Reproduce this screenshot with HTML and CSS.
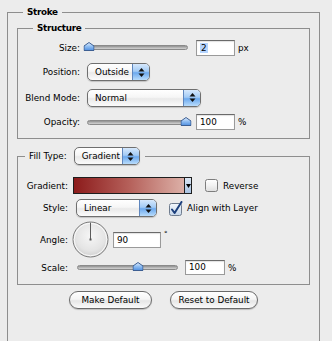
FILE: index.html
```html
<!DOCTYPE html>
<html lang="en">
<head>
<meta charset="utf-8">
<title>Stroke</title>
<link rel="stylesheet" href="styles.css">
</head>
<body>
<fieldset class="box box-outer">
  <legend class="legend legend-outer">Stroke</legend>
  <div class="outer-body">
    <fieldset class="box box-structure">
      <legend class="legend legend-structure">Structure</legend>
      <div class="form form-structure">
        <span class="label">Size:</span>
        <div class="control">
          <div class="slider slider-struct"><svg class="thumb" style="left:1%" width="11" height="9" viewBox="0 0 11 9"><defs><linearGradient id="tg1" x1="0" y1="0" x2="0" y2="1"><stop offset="0" stop-color="#e3f0ff"/><stop offset="0.5" stop-color="#8fbdf2"/><stop offset="1" stop-color="#4f8fe0"/></linearGradient></defs><polygon points="0.5,8.5 0.5,4 5.5,0.5 10.5,4 10.5,8.5" fill="url(#tg1)" stroke="#3d5f93"/></svg></div>
          <div class="field field-struct"><span class="sel">2</span></div>
          <span class="unit">px</span>
        </div>
        <span class="label">Position:</span>
        <div class="control">
          <div class="popup popup-position"><span class="popup-text">Outside</span><span class="popup-arrows"><svg width="7" height="11" viewBox="0 0 7 11"><polygon points="0.5,4.5 3.5,1 6.5,4.5" fill="#111"/><polygon points="0.5,6.5 3.5,10 6.5,6.5" fill="#111"/></svg></span></div>
        </div>
        <span class="label">Blend Mode:</span>
        <div class="control">
          <div class="popup popup-blend"><span class="popup-text">Normal</span><span class="popup-arrows"><svg width="7" height="11" viewBox="0 0 7 11"><polygon points="0.5,4.5 3.5,1 6.5,4.5" fill="#111"/><polygon points="0.5,6.5 3.5,10 6.5,6.5" fill="#111"/></svg></span></div>
        </div>
        <span class="label">Opacity:</span>
        <div class="control">
          <div class="slider slider-struct"><svg class="thumb" style="left:99%" width="11" height="9" viewBox="0 0 11 9"><defs><linearGradient id="tg2" x1="0" y1="0" x2="0" y2="1"><stop offset="0" stop-color="#e3f0ff"/><stop offset="0.5" stop-color="#8fbdf2"/><stop offset="1" stop-color="#4f8fe0"/></linearGradient></defs><polygon points="0.5,8.5 0.5,4 5.5,0.5 10.5,4 10.5,8.5" fill="url(#tg2)" stroke="#3d5f93"/></svg></div>
          <div class="field field-struct">100</div>
          <span class="unit">%</span>
        </div>
      </div>
    </fieldset>

    <fieldset class="box box-fill">
      <legend class="legend legend-fill">
        <span class="legend-label">Fill Type:</span>
        <div class="popup popup-fill"><span class="popup-text">Gradient</span><span class="popup-arrows"><svg width="7" height="11" viewBox="0 0 7 11"><polygon points="0.5,4.5 3.5,1 6.5,4.5" fill="#111"/><polygon points="0.5,6.5 3.5,10 6.5,6.5" fill="#111"/></svg></span></div>
      </legend>
      <div class="form form-fill">
        <span class="label">Gradient:</span>
        <div class="control">
          <div class="gradient-picker"><span class="gradient-swatch"></span><span class="gradient-arrow"><svg width="5" height="4" viewBox="0 0 5 4"><polygon points="0,0 5,0 2.5,4" fill="#000"/></svg></span></div>
          <span class="check check-reverse"><svg class="checkbox" width="13" height="13" viewBox="0 0 13 13"><defs><linearGradient id="cb1" x1="0" y1="0" x2="0" y2="1"><stop offset="0" stop-color="#ffffff"/><stop offset="0.5" stop-color="#f2f2f2"/><stop offset="1" stop-color="#dedede"/></linearGradient></defs><rect x="0.5" y="0.5" width="12" height="12" rx="2" fill="url(#cb1)" stroke="#7d7d7d"/></svg>Reverse</span>
        </div>
        <span class="label">Style:</span>
        <div class="control">
          <div class="popup popup-style"><span class="popup-text">Linear</span><span class="popup-arrows"><svg width="7" height="11" viewBox="0 0 7 11"><polygon points="0.5,4.5 3.5,1 6.5,4.5" fill="#111"/><polygon points="0.5,6.5 3.5,10 6.5,6.5" fill="#111"/></svg></span></div>
          <span class="check check-align"><svg class="checkbox" width="14" height="15" viewBox="0 0 14 15"><defs><linearGradient id="cb2" x1="0" y1="0" x2="0" y2="1"><stop offset="0" stop-color="#f4f8fd"/><stop offset="0.5" stop-color="#dde7f2"/><stop offset="1" stop-color="#c6d6ea"/></linearGradient></defs><rect x="0.5" y="2.5" width="12" height="12" rx="2" fill="url(#cb2)" stroke="#6f7c8e"/><path d="M3 8.5 L5.6 12 L12.5 1" fill="none" stroke="#1c3f7c" stroke-width="2" stroke-linecap="round" stroke-linejoin="round"/></svg>Align with Layer</span>
        </div>
        <span class="label">Angle:</span>
        <div class="control">
          <svg class="dial" width="37" height="37" viewBox="0 0 37 37"><defs><radialGradient id="dg" cx="0.5" cy="0.4" r="0.6"><stop offset="0" stop-color="#f6f6f6"/><stop offset="0.7" stop-color="#e4e4e4"/><stop offset="1" stop-color="#cfcfcf"/></radialGradient></defs><circle cx="18.5" cy="18.5" r="17.5" fill="url(#dg)" stroke="#7b7b7b"/><circle cx="18.5" cy="18.5" r="16.3" fill="none" stroke="#fbfbfb" stroke-width="1"/><line x1="18.5" y1="18.5" x2="18.5" y2="1.5" stroke="#5c5c5c" stroke-width="1"/><rect x="17.5" y="17.5" width="2" height="2" fill="#555"/></svg>
          <div class="field field-angle">90</div>
          <span class="degree">°</span>
        </div>
        <span class="label">Scale:</span>
        <div class="control">
          <div class="slider slider-scale"><svg class="thumb" style="left:61%" width="11" height="9" viewBox="0 0 11 9"><defs><linearGradient id="tg3" x1="0" y1="0" x2="0" y2="1"><stop offset="0" stop-color="#e3f0ff"/><stop offset="0.5" stop-color="#8fbdf2"/><stop offset="1" stop-color="#4f8fe0"/></linearGradient></defs><polygon points="0.5,8.5 0.5,4 5.5,0.5 10.5,4 10.5,8.5" fill="url(#tg3)" stroke="#3d5f93"/></svg></div>
          <div class="field field-scale">100</div>
          <span class="unit">%</span>
        </div>
      </div>
    </fieldset>

    <div class="buttons">
      <button class="btn btn-make" type="button">Make Default</button>
      <button class="btn btn-reset" type="button">Reset to Default</button>
    </div>
  </div>
</fieldset>
</body>
</html>
```

FILE: styles.css
```css
* { box-sizing: border-box; }
html, body { margin: 0; padding: 0; }
body {
  width: 332px;
  height: 341px;
  overflow: hidden;
  background: #ececec;
  font-family: "DejaVu Sans", "Liberation Sans", sans-serif;
  font-size: 8.8px;
  color: #000;
}

.box {
  margin: 0;
  padding: 0;
  min-width: 0;
  border: 1px solid #8e8e8e;
}
.box-outer {
  margin: 6px 12px 0 7px;
  height: 335px;
  border-bottom: none;
}
.outer-body { padding: 3px 9px 0; }

.legend {
  padding: 0 4px;
  line-height: 13px;
  height: 13px;
  font-weight: bold;
  letter-spacing: -0.3px;
}
.legend-outer { margin-left: 15px; }
.legend-structure { margin-left: 15px; }
.legend-fill {
  margin-left: 7px;
  padding: 0 5px 0 4px;
  height: 18px;
  display: flex;
  align-items: center;
  gap: 7px;
  font-weight: normal;
  letter-spacing: 0;
}

.box-fill { margin-top: 8px; }

.form {
  display: grid;
  align-items: center;
}
.form-structure {
  grid-template-columns: 62px auto;
  grid-template-rows: 23px 26px 25px 24px;
  column-gap: 7px;
  padding: 1px 0 4px;
}
.form-fill {
  grid-template-columns: 50px auto;
  grid-template-rows: 23px 22px 41px 15px;
  column-gap: 5px;
  padding: 9px 0 9px;
}
.label { text-align: right; white-space: nowrap; }
.control { display: flex; align-items: center; }

/* popup buttons */
.popup {
  display: flex;
  height: 18px;
  border: 1px solid #6f6f6f;
  border-radius: 5px;
  overflow: hidden;
  background: linear-gradient(#ffffff 0%, #f6f6f6 45%, #e9e9e9 55%, #fbfbfb 100%);
  box-shadow: 0 1px 1px rgba(0, 0, 0, 0.18);
}
.popup-text {
  flex: 1;
  padding-left: 7px;
  line-height: 16px;
  white-space: nowrap;
}
.popup-arrows {
  width: 17px;
  border-left: 1px solid #5f86bd;
  background: linear-gradient(#d6e8fc 0%, #a3cbf5 45%, #6ca9ee 55%, #b9dcfb 100%);
  display: flex;
  align-items: center;
  justify-content: center;
}
.popup-position { width: 63px; }
.popup-blend { width: 114px; }
.popup-fill { width: 66px; }
.popup-style { width: 81px; margin-left: 3px; }

/* sliders */
.slider {
  position: relative;
  height: 5px;
  border-radius: 3px;
  border: 1px solid #8a8a8a;
  background: linear-gradient(#8f8f8f, #b4b4b4 50%, #d2d2d2);
}
.slider-struct { width: 101px; }
.slider-scale { width: 101px; margin-left: 4px; }
.thumb {
  position: absolute;
  top: -4px;
  transform: translateX(-50%);
  display: block;
}

/* text fields */
.field {
  height: 16px;
  border: 1px solid #9a9a9a;
  border-top-color: #6a6a6a;
  background: #fff;
  box-shadow: inset 0 1px 1px rgba(0, 0, 0, 0.12);
  padding-left: 3px;
  line-height: 14px;
}
.field-struct { width: 39px; margin-left: 8px; }
.field-angle { width: 48px; margin-left: 4px; height: 16px; }
.field-scale { width: 40px; margin-left: 7px; height: 15px; line-height: 13px; }
.sel { background: #b5d5ff; padding: 0 1px; }
.unit { margin-left: 3px; }
.degree { margin-left: 3px; align-self: flex-start; margin-top: 9px; font-size: 7px; }

.dial { display: block; margin-left: -1px; }

/* gradient picker */
.gradient-picker {
  display: flex;
  height: 17px;
  border: 1px solid #1e1e1e;
}
.gradient-swatch {
  width: 110px;
  background: linear-gradient(to right, #8c1b1b, #b5605a 50%, #dcb0a7);
}
.gradient-arrow {
  width: 7px;
  border-left: 1px solid #1e1e1e;
  background: linear-gradient(#dbe6f3, #a9c3e2);
  display: flex;
  align-items: center;
  justify-content: center;
}

/* checkboxes */
.check { display: flex; align-items: center; gap: 5px; white-space: nowrap; }
.checkbox { display: block; }
.check-reverse { margin-left: 13px; }
.check-align { margin-left: 12px; gap: 4px; }

/* buttons */
.buttons {
  display: flex;
  justify-content: center;
  gap: 18px;
  margin-top: 6px;
}
.btn {
  height: 18px;
  padding: 0;
  border: 1px solid #6a6a6a;
  border-radius: 9px;
  background: linear-gradient(#ffffff 0%, #f5f5f5 45%, #e6e6e6 55%, #fafafa 100%);
  box-shadow: 0 1px 1px rgba(0, 0, 0, 0.2);
  font-family: "DejaVu Sans", "Liberation Sans", sans-serif;
  font-size: 8.8px;
  color: #000;
}
.btn-make { width: 83px; }
.btn-reset { width: 88px; }
```
